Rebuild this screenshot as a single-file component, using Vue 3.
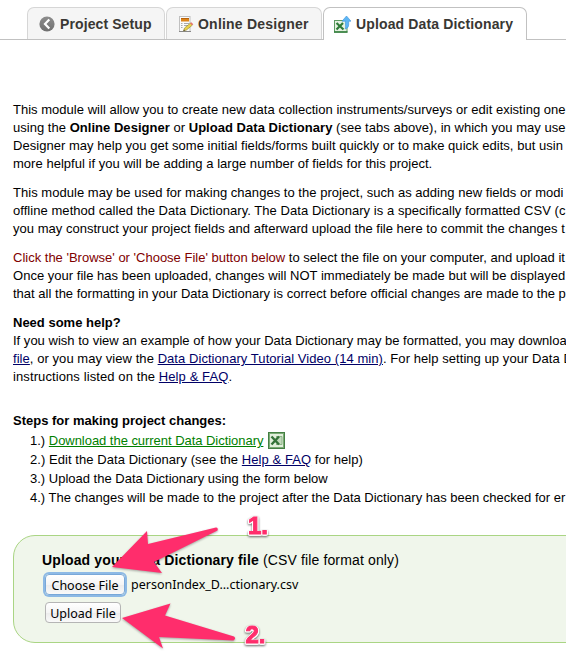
<script setup>
const paragraphs = [
  {
    name: 'intro',
    lines: [
      { ls: 0.02, s: [{ t: 'This module will allow you to create new data collection instruments/surveys or edit existing one' }] },
      { ls: 0.03, s: [{ t: 'using the ' }, { t: 'Online Designer', k: 'bold' }, { t: ' or ' }, { t: 'Upload Data Dictionary', k: 'bold' }, { t: ' (see tabs above), in which you may use' }] },
      { ls: 0.03, s: [{ t: 'Designer may help you get some initial fields/forms built quickly or to make quick edits, but usin' }] },
      { ls: 0.03, s: [{ t: 'more helpful if you will be adding a large number of fields for this project.' }] },
    ],
  },
  {
    name: 'offline',
    lines: [
      { ls: 0.03, s: [{ t: 'This module may be used for making changes to the project, such as adding new fields or modi' }] },
      { ls: 0.05, s: [{ t: 'offline method called the Data Dictionary. The Data Dictionary is a specifically formatted CSV (c' }] },
      { ls: 0.02, s: [{ t: 'you may construct your project fields and afterward upload the file here to commit the changes t' }] },
    ],
  },
  {
    name: 'browse',
    lines: [
      { ls: 0, s: [{ t: "Click the 'Browse' or 'Choose File' button below", k: 'maroon' }, { t: ' to select the file on your computer, and upload it' }] },
      { ls: 0.02, s: [{ t: 'Once your file has been uploaded, changes will NOT immediately be made but will be displayed' }] },
      { ls: 0.01, s: [{ t: 'that all the formatting in your Data Dictionary is correct before official changes are made to the p' }] },
    ],
  },
  {
    name: 'help',
    lines: [
      { ls: 0, s: [{ t: 'Need some help?', k: 'bold' }] },
      { ls: 0.01, s: [{ t: 'If you wish to view an example of how your Data Dictionary may be formatted, you may downloa' }] },
      { ls: 0.06, s: [{ t: 'file', k: 'link' }, { t: ', or you may view the ' }, { t: 'Data Dictionary Tutorial Video (14 min)', k: 'link' }, { t: '. For help setting up your Data D' }] },
      { ls: 0.1, s: [{ t: 'instructions listed on the ' }, { t: 'Help & FAQ', k: 'link' }, { t: '.' }] },
    ],
  },
]
</script>

<template>
  <main class="page">
    <nav class="tabs">
      <div class="tab setup">
        <svg class="icon" viewBox="0 0 16 16">
          <defs><linearGradient id="disc" x1="0" y1="0" x2="0" y2="1"><stop offset="0" stop-color="#8d8d8d" /><stop offset="1" stop-color="#707070" /></linearGradient></defs>
          <circle cx="8" cy="8" r="7.6" fill="url(#disc)" />
          <path d="M10.300 3.600 6 8l4.300 4.400" fill="none" stroke="#fff" stroke-width="2.200" />
        </svg>
        <span>Project Setup</span>
      </div>
      <div class="tab designer">
        <svg class="icon" viewBox="0 0 16 16">
          <rect x="1.500" y=".5" width="10.500" height="15" fill="#fafafa" stroke="#c0c0c0" />
          <path d="M1 15.500h12" stroke="#888" />
          <rect x="3" y="2" width="8" height="3.500" fill="#dd8418" />
          <path d="M3 2.500h8" stroke="#b8620c" />
          <path d="M3 7.500h1.500M6 7.500h5M3 9.500h1.500M6 9.500h4M3 11.500h1.500" stroke="#aaa" />
          <path d="m5.500 15 1-3 6-5 2 2-6 5z" fill="#e9d24a" stroke="#8f8133" stroke-width=".6" />
          <path d="m12 7.300 1.300-1.100 2 2-1.300 1.100z" fill="#e6746c" />
          <path d="m5.500 15 .5-1.500 1 1z" fill="#333" />
        </svg>
        <span>Online Designer</span>
      </div>
      <div class="tab upload">
        <svg class="icon" viewBox="0 0 17 17">
          <rect x=".5" y="4.500" width="12.500" height="11.500" fill="#e6f2e2" stroke="#5d9a60" />
          <path d="M0 16h13.500" stroke="#2f7b38" stroke-width="1.500" />
          <path d="m2.500 7 7 6.500M9 7l-6.500 6.500" stroke="#2f7b38" stroke-width="2.200" />
          <path d="M12.500 0 17 5.200h-2.300V9q0 3-3.500 4 .7-2 .3-4V5.200H8z" fill="#5db6f5" stroke="#3d93d8" stroke-width=".6" />
        </svg>
        <span>Upload Data Dictionary</span>
      </div>
    </nav>

    <article class="copy">
      <section v-for="p in paragraphs" :key="p.name" class="para" :class="p.name">
        <div v-for="(line, i) in p.lines" :key="i" class="line" :style="{ letterSpacing: line.ls + 'px' }"><span v-for="(s, j) in line.s" :key="j" :class="s.k">{{ s.t }}</span></div>
      </section>
      <section class="steps">
        <div class="line bold">Steps for making project changes:</div>
        <div class="step">1.) <span class="green">Download the current Data Dictionary</span><svg class="sheet" viewBox="0 0 17 17">
          <rect x=".5" y=".5" width="16" height="16" fill="#e2efdc" stroke="#447f43" />
          <rect x="1.500" y="1.500" width="14" height="14" fill="none" stroke="#7aaa74" />
          <path d="M8 4.500h6v8H8" fill="#c3dabd" stroke="#8db588" />
          <path d="m3.500 4.500 7.500 8M11 4.500l-7.500 8" stroke="#347238" stroke-width="2.400" />
        </svg></div>
        <div class="step wide">2.) Edit the Data Dictionary (see the <span class="link">Help &amp; FAQ</span> for help)</div>
        <div class="step">3.) Upload the Data Dictionary using the form below</div>
        <div class="step">4.) The changes will be made to the project after the Data Dictionary has been checked for er</div>
      </section>
    </article>

    <form class="box" @submit.prevent>
      <div class="title"><b>Upload your Data Dictionary file</b> (CSV file format only)</div>
      <div class="row"><button type="button" class="btn focus">Choose File</button><span class="filename">personIndex_D...ctionary.csv</span></div>
      <button type="button" class="btn submit">Upload File</button>
    </form>

    <svg class="marks" viewBox="0 0 566 660">
      <g class="shade" fill="#ff2d6c">
        <path d="M112 567 147 531l1 13 68-16.500q2.500.3 1.500 3L154 562l8 11z" />
        <path d="m122 618 48.500-14.500L165 615.500l69 21q2.500 2-.5 4L159 637l4 11.500z" />
      </g>
      <g class="num"><text x="248" y="533.500">1.</text><text x="245.500" y="642.500">2.</text></g>
    </svg>
  </main>
</template>

<style>
body { margin: 0; background: #fff; }
</style>

<style scoped>
.page { position: relative; width: 566px; height: 660px; overflow: hidden; background: #fff; color: #000; font: 13px/18px "Liberation Sans", Arial, sans-serif; white-space: pre; }
.tabs { display: flex; height: 40px; padding-top: 7px; padding-left: 27px; box-sizing: border-box; border-bottom: 1px solid #c1c1c1; }
.tab { display: flex; align-items: center; box-sizing: border-box; height: 32px; border: 1px solid #d6d6d6; border-bottom: 0; border-radius: 7px 7px 0 0; background: #f5f5f5; color: #393733; font-weight: bold; font-size: 14px; flex: none; }
.setup { width: 138px; padding-left: 11px; margin-right: 1px; letter-spacing: .1px; }
.designer { width: 156px; padding-left: 11px; margin-right: 1px; letter-spacing: .22px; }
.designer .icon { margin-right: 4px; }
.upload { width: 204px; height: 33px; padding-left: 10px; border-color: #c1c1c1; background: #fff; letter-spacing: .14px; }
.icon { width: 16px; height: 16px; margin-right: 5px; flex: none; }
.upload .icon { width: 17px; height: 17px; }
.copy { padding: 61px 0 0 13px; }
.para { margin-bottom: 11px; }
.help { margin-bottom: 26px; }
.line { height: 18px; }
.bold { font-weight: bold; }
.maroon { color: #800000; }
.link { color: #000066; text-decoration: underline; }
.green { color: #008000; text-decoration: underline; letter-spacing: -.04px; }
.steps { height: 96px; }
.step { height: 19px; line-height: 21px; padding-left: 17px; }
.wide { letter-spacing: .06px; }
.sheet { width: 17px; height: 17px; margin-left: 5px; vertical-align: -4px; }
.box { box-sizing: border-box; width: 580px; height: 108px; margin: 27px 0 0 13px; padding: 15px 0 0 28px; border: 1px solid #aad584; border-radius: 22px; background: #f0f6eb; }
.title { font-size: 14px; height: 18px; letter-spacing: .14px; }
.row { display: flex; align-items: center; height: 23px; margin-top: 4px; }
.btn { box-sizing: border-box; display: block; height: 21px; padding: 0; border: 1px solid #b5b5b5; border-radius: 4px; background: linear-gradient(#fff, #f5f5f5 50%, #ececec 51%, #fafafa); color: #000; font: 12.5px/21px "Noto Sans", sans-serif; white-space: nowrap; }
.focus { width: 80px; margin-left: 3px; border-color: #79a8d8; box-shadow: 0 0 0 2px #8db9e5; }
.submit { width: 76px; margin: 6px 0 0 3px; }
.filename { margin-left: 6px; font: 12.5px/20px "Noto Sans", sans-serif; padding-top: 1px; }
.marks { position: absolute; left: 0; top: 0; width: 566px; height: 660px; }
.shade { filter: drop-shadow(0 1px 1px #0005); }
.num { font: bold 24px "Liberation Sans", sans-serif; fill: #ff2d6c; stroke: #ff2d6c; stroke-width: 1px; filter: drop-shadow(1px 0 0 #fff) drop-shadow(-1px 0 0 #fff) drop-shadow(0 1px 0 #fff) drop-shadow(0 1px 1px #0009); }
</style>
